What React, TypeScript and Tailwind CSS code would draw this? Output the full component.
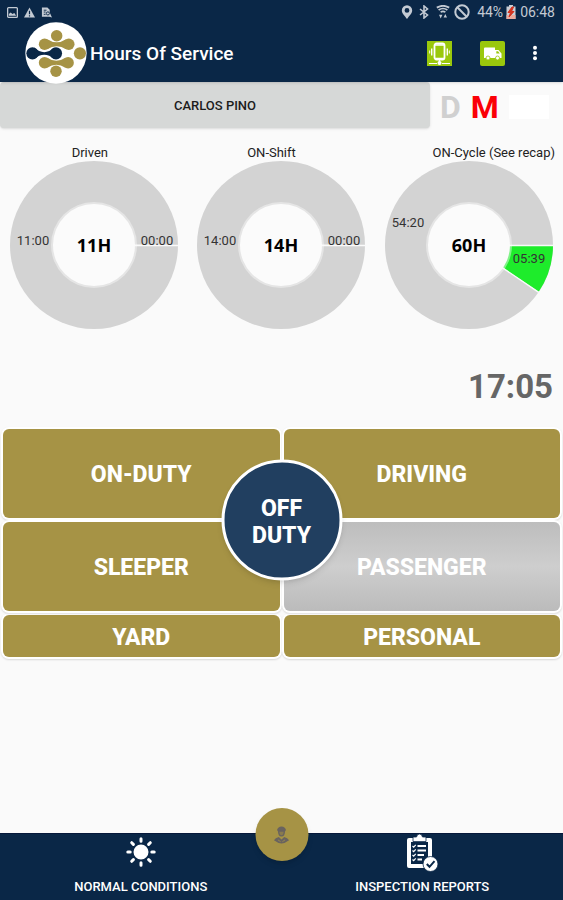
import type { ReactNode } from "react";

type Chart = {
  label: string;
  labelClass: string;
  total: string;
  left: string;
  leftY: number;
  used: string;
  usedX: number;
  usedY: number;
  angle: number;
};

const charts: Chart[] = [
  { label: "Driven", labelClass: "text-center pr-2", total: "11H", left: "11:00", leftY: 84, used: "00:00", usedX: 147, usedY: 84, angle: 0 },
  { label: "ON-Shift", labelClass: "text-center pr-5", total: "14H", left: "14:00", leftY: 84, used: "00:00", usedX: 147, usedY: 84, angle: 0 },
  { label: "ON-Cycle (See recap)", labelClass: "text-right pr-2", total: "60H", left: "54:20", leftY: 66, used: "05:39", usedX: 144, usedY: 102, angle: 33.9 },
];

function Logo() {
  return (
    <svg viewBox="76 65 184 184" className="size-[62px] shrink-0" aria-hidden="true">
      <circle cx="168" cy="157" r="91" fill="#fff" />
      <g fill="#a69345">
        <circle cx="170" cy="106" r="17" />
        <circle cx="134" cy="131" r="17" />
        <circle cx="206" cy="131" r="17" />
        <path d="M142 116Q170 134 198 116V146Q170 128 142 146Z" />
        <circle cx="239" cy="158" r="18" />
        <circle cx="134" cy="186" r="17" />
        <circle cx="204" cy="186" r="17" />
        <path d="M142 171Q169 189 196 171V201Q169 183 142 201Z" />
        <circle cx="168" cy="211" r="17" />
      </g>
      <g fill="#0a2747">
        <circle cx="98" cy="158" r="18" />
        <circle cx="168" cy="158" r="18" />
        <path d="M103 141Q133 168 163 141V175Q133 149 103 175Z" />
      </g>
    </svg>
  );
}

function StatusBar() {
  return (
    <div className="flex h-6 items-center justify-between pl-[7px] pr-2 text-[#c3cad3]">
      <div className="flex items-center gap-[6px]">
        <svg viewBox="0 0 12 12" className="size-[11px]" fill="none" stroke="currentColor" strokeWidth="1.4">
          <rect x="0.7" y="0.7" width="10.6" height="10.6" rx="1" />
          <path d="M2 9.5V7.5L4 6L6 7.5L8 6.5L10 9.5Z" fill="currentColor" stroke="none" />
        </svg>
        <svg viewBox="0 0 12 12" className="size-[11px]">
          <path d="M6 0.5L12 11.5H0Z" fill="currentColor" />
          <path d="M6 4V8M6 9V10.3" stroke="#0a2747" strokeWidth="1.3" />
        </svg>
        <svg viewBox="0 0 12 12" className="size-[11px]">
          <path d="M1 0.5H7L9.5 3V6L12 11.5L9 10.5H1Z" fill="currentColor" />
          <path d="M3 3.5H6M3 5.5H5M3 8H5" stroke="#0a2747" strokeWidth="1" />
          <circle cx="7.5" cy="7" r="1.7" fill="none" stroke="#0a2747" strokeWidth="1" />
        </svg>
      </div>
      <div className="flex items-center text-sm">
        <svg viewBox="0 0 12 14" className="mr-[6px] h-[14px] w-3">
          <path d="M6 0.3A5.2 5.2 0 0 1 11.2 5.5C11.2 8.5 8 11 6 14C4 11 0.8 8.5 0.8 5.5A5.2 5.2 0 0 1 6 0.3ZM6 3A2.4 2.4 0 1 0 6 7.8A2.4 2.4 0 1 0 6 3Z" fill="currentColor" fillRule="evenodd" />
        </svg>
        <svg viewBox="0 0 10 14" className="mr-[7px] h-[14px] w-[10px]" fill="none" stroke="currentColor" strokeWidth="1.6">
          <path d="M1 4L8.5 10L5 13V1L8.5 4L1 10" />
        </svg>
        <svg viewBox="0 0 14 14" className="mr-1 size-[14px]" fill="none" stroke="currentColor">
          <path d="M0.8 2.6Q7 -1 13.2 2.6" strokeWidth="1.8" />
          <path d="M2.6 5Q7 2 11.4 5" strokeWidth="1.7" />
          <path d="M4.6 7.2Q7 5.6 9.4 7.2" strokeWidth="1.6" />
          <path d="M3 9.8H6.4L4.7 13.4ZM7.6 12.6H11L9.3 9Z" fill="currentColor" stroke="none" />
        </svg>
        <svg viewBox="0 0 16 16" className="mr-[7px] size-4" fill="none" stroke="currentColor" strokeWidth="2">
          <circle cx="8" cy="8" r="6.7" />
          <path d="M3.3 3.3L12.7 12.7" />
        </svg>
        <span className="mr-[3px]">44%</span>
        <svg viewBox="0 0 10 14" className="mr-1 h-[14px] w-[10px]">
          <path d="M3 0H7V1.5H9.5V14H0.5V1.5H3Z" fill="#c9ced5" />
          <path d="M0.5 10H9.5V14H0.5Z" fill="#eba99c" />
          <path d="M6 2L2 7.5H4.5L3 12L8 6.5H5.5L7.5 2Z" fill="#d3311e" stroke="#d3311e" />
        </svg>
        <span>06:48</span>
      </div>
    </div>
  );
}

function Header() {
  return (
    <header className="relative z-10 bg-[#0a2747] shadow">
      <StatusBar />
      <div className="flex h-[58px] items-center pl-[25px] pr-5">
        <Logo />
        <h1 className="ml-[3px] flex-1 pt-[2px] text-[19px] font-medium text-white">Hours Of Service</h1>
        <button type="button" aria-label="Device" className="mr-[28px]">
          <svg viewBox="0 0 25 25" className="size-[25px]">
            <rect width="25" height="25" fill="#9ac80c" />
            <rect x="7.5" y="2.5" width="10" height="16" rx="2" fill="none" stroke="#fff" strokeWidth="1.8" />
            <path d="M8 4H17M8 17.5H17" stroke="#fff" strokeWidth="1.6" />
            <path d="M12.5 19V22M2 22.5H10M15 22.5H23" stroke="#fff" strokeWidth="1.2" />
            <path d="M4.7 7.5V14.5M20.3 7.5V14.5" stroke="#fff" strokeWidth="1.4" />
            <path d="M2.7 9.5V12.5M22.3 9.5V12.5" stroke="#fff" />
            <circle cx="12.5" cy="22" r="2" fill="#fff" />
          </svg>
        </button>
        <button type="button" aria-label="Vehicle" className="mr-[22px]">
          <svg viewBox="0 0 25 25" className="size-[25px]">
            <rect width="25" height="25" rx="2" fill="#9ac80c" />
            <path d="M5 6.5H15V9H18.5L21.5 12.5V17H4V7.5Q4 6.5 5 6.5Z" fill="#fff" />
            <path d="M16.3 10.3H18L19.8 12.5H16.3Z" fill="#9ac80c" />
            <circle cx="8" cy="17" r="2" fill="#fff" stroke="#9ac80c" strokeWidth="0.8" />
            <circle cx="17.5" cy="17" r="2" fill="#fff" stroke="#9ac80c" strokeWidth="0.8" />
          </svg>
        </button>
        <button type="button" aria-label="More options">
          <svg viewBox="0 0 16 16" className="size-4" fill="#fff">
            <circle cx="8" cy="2.7" r="2" />
            <circle cx="8" cy="8" r="2" />
            <circle cx="8" cy="13.3" r="2" />
          </svg>
        </button>
      </div>
    </header>
  );
}

function Donut({ total, left, leftY, used, usedX, usedY, angle }: Chart) {
  const rad = (angle * Math.PI) / 180;
  const x = Math.cos(rad);
  const y = Math.sin(rad);

  return (
    <svg viewBox="0 0 168 168" className="mx-auto w-[168px] max-w-full">
      <circle cx="84" cy="84" r="84" fill="#d3d3d3" />
      {angle > 0 && (
        <path d={`M84 84H168A84 84 0 0 1 ${84 + 84 * x} ${84 + 84 * y}Z`} fill="#1eec2b" />
      )}
      <path d={`M84 84.5H168M84 84L${84 + 84 * x} ${84.5 + 84 * y}`} stroke="#fafafa" strokeWidth="1.4" />
      <circle cx="84" cy="84" r="43" fill="#fafafa" fillOpacity="0.45" />
      <circle cx="84" cy="84" r="41" fill="#fbfbfb" />
      <g textAnchor="middle">
        <text x="84" y="91" className="fill-black font-['Noto_Sans'] text-lg font-bold">{total}</text>
        <text x="23" y={leftY} className="fill-[#333] text-[13px]">{left}</text>
        <text x={usedX} y={usedY} className="fill-[#333] text-[13px]">{used}</text>
      </g>
    </svg>
  );
}

function DutyButton({ children, className }: { children: ReactNode; className: string }) {
  return (
    <button
      type="button"
      className={`rounded-md pt-1 text-[23px] font-extrabold text-white shadow-[0_0_0_2px_#fff,0_1px_2px_2px_#00000022] ${className}`}
    >
      {children}
    </button>
  );
}

function SunIcon() {
  return (
    <svg viewBox="0 0 32 32" className="size-8" fill="#fff" stroke="#fff" strokeWidth="3" strokeLinecap="round">
      <circle cx="16" cy="16" r="6" />
      <path d="M16 2.8V5.2M16 26.8V29.2M2.8 16H5.2M26.8 16H29.2M6.7 6.7L8.4 8.4M23.6 23.6L25.3 25.3M6.7 25.3L8.4 23.6M23.6 8.4L25.3 6.7" />
    </svg>
  );
}

function ReportIcon() {
  return (
    <svg viewBox="0 0 32 38" className="h-[38px] w-8">
      <path d="M2 4H24Q26 4 26 6V32Q26 34 24 34H3Q1 34 1 32V6Q1 4 3 4Z" fill="#fff" />
      <path d="M5 8H22V30H5Z" fill="#0a2747" />
      <path d="M7 3H10.5Q11 0 13.5 0Q16 0 16.5 3H20V7.5H7Z" fill="#fff" stroke="#0a2747" strokeWidth="0.8" />
      <path d="M11.5 12H20M11.5 16.5H20M11.5 21H18M11.5 25.5H16" stroke="#fff" strokeWidth="2" />
      <path d="M6.5 12L7.7 13.2L9.7 10.8M6.5 16.5L7.7 17.7L9.7 15.3M6.5 21L7.7 22.2L9.7 19.8M6.5 25.5L7.7 26.7L9.7 24.3" fill="none" stroke="#fff" strokeWidth="1.2" />
      <circle cx="24.5" cy="30" r="7.5" fill="#fff" stroke="#0a2747" strokeWidth="0.8" />
      <path d="M20.8 30L23.5 32.8L28.5 27.2" fill="none" stroke="#0a2747" strokeWidth="2" />
    </svg>
  );
}

function BottomNav() {
  return (
    <nav className="relative grid h-[67px] grid-cols-2 border-t border-[#06183a] bg-[#0a2747] text-[13px] font-medium text-white">
      <button type="button" className="flex flex-col items-center justify-end gap-[9px] pb-1">
        <SunIcon />
        <span>NORMAL CONDITIONS</span>
      </button>
      <button type="button" className="flex flex-col items-center justify-end gap-[5px] pb-1">
        <ReportIcon />
        <span>INSPECTION REPORTS</span>
      </button>
      <button
        type="button"
        aria-label="Driver"
        className="absolute -top-[26px] left-1/2 flex size-[53px] -translate-x-1/2 items-center justify-center rounded-full bg-[#a69345] shadow-md"
      >
        <svg viewBox="0 0 18 20" className="h-[18px] w-4" fill="#69635f">
          <path d="M4 4.5Q5 0.5 9 0.5Q13 0.5 14 4.5L12.6 6.5H5.4Z" />
          <path d="M5.8 5.5H12.2Q12.2 11 9 11Q5.8 11 5.8 5.5Z" fill="#8a7b4d" stroke="#69635f" strokeWidth="1.6" />
          <path d="M0.5 16Q2 13 6 12.3L9 15L12 12.3Q16 13 17.5 16Q13 19.5 9 19.5Q5 19.5 0.5 16Z" />
          <path d="M5 15.5L8 17.5M13 15.5L10 17.5" stroke="#a69345" strokeWidth="0.8" />
        </svg>
      </button>
    </nav>
  );
}

export default function App() {
  return (
    <div className="flex min-h-screen flex-col bg-[#fafafa] font-['Roboto',sans-serif]">
      <Header />

      <div className="flex h-[46px]">
        <button type="button" className="flex-1 rounded-sm bg-[#d6d8d7] pt-[2px] text-[13px] font-medium text-[#1c1c1c] shadow-sm">
          CARLOS PINO
        </button>
        <div className="flex w-[133px] items-center gap-[10px] pt-[3px] pl-[10px] text-[32px] font-bold">
          <span className="text-[#d0d0d0]">D</span>
          <span className="text-[#fb0007]">M</span>
          <span className="h-6 w-10 bg-white" />
        </div>
      </div>

      <main className="flex-1">
        <section className="grid grid-cols-3 pt-4">
          {charts.map((chart) => (
            <div key={chart.label}>
              <h2 className={`text-[13px] leading-[17px] whitespace-nowrap text-[#222] ${chart.labelClass}`}>
                {chart.label}
              </h2>
              <Donut {...chart} />
            </div>
          ))}
        </section>

        <p className="mt-[38px] pr-[10px] text-right text-[33px] leading-10 font-bold text-[#666]">17:05</p>

        <section className="px-[3px] pt-[22px]">
          <div className="relative grid grid-cols-2 gap-1">
            <DutyButton className="h-[89px] bg-[#a69345]">ON-DUTY</DutyButton>
            <DutyButton className="h-[89px] bg-[#a69345]">DRIVING</DutyButton>
            <DutyButton className="h-[89px] bg-[#a69345]">SLEEPER</DutyButton>
            <DutyButton className="h-[89px] bg-linear-to-b from-[#bdbdbd] via-[#cecece] to-[#bbbbbb]">
              PASSENGER
            </DutyButton>
            <button
              type="button"
              className="absolute top-1/2 left-1/2 size-[121px] -translate-x-1/2 -translate-y-1/2 rounded-full border-3 border-white bg-[#213f60] pt-[2px] text-[23px] leading-[27px] font-extrabold text-white shadow-md"
            >
              OFF
              <br />
              DUTY
            </button>
          </div>
          <div className="mt-1 grid grid-cols-2 gap-1">
            <DutyButton className="h-[42px] bg-[#a69345]">YARD</DutyButton>
            <DutyButton className="h-[42px] bg-[#a69345]">PERSONAL</DutyButton>
          </div>
        </section>
      </main>

      <BottomNav />
    </div>
  );
}
